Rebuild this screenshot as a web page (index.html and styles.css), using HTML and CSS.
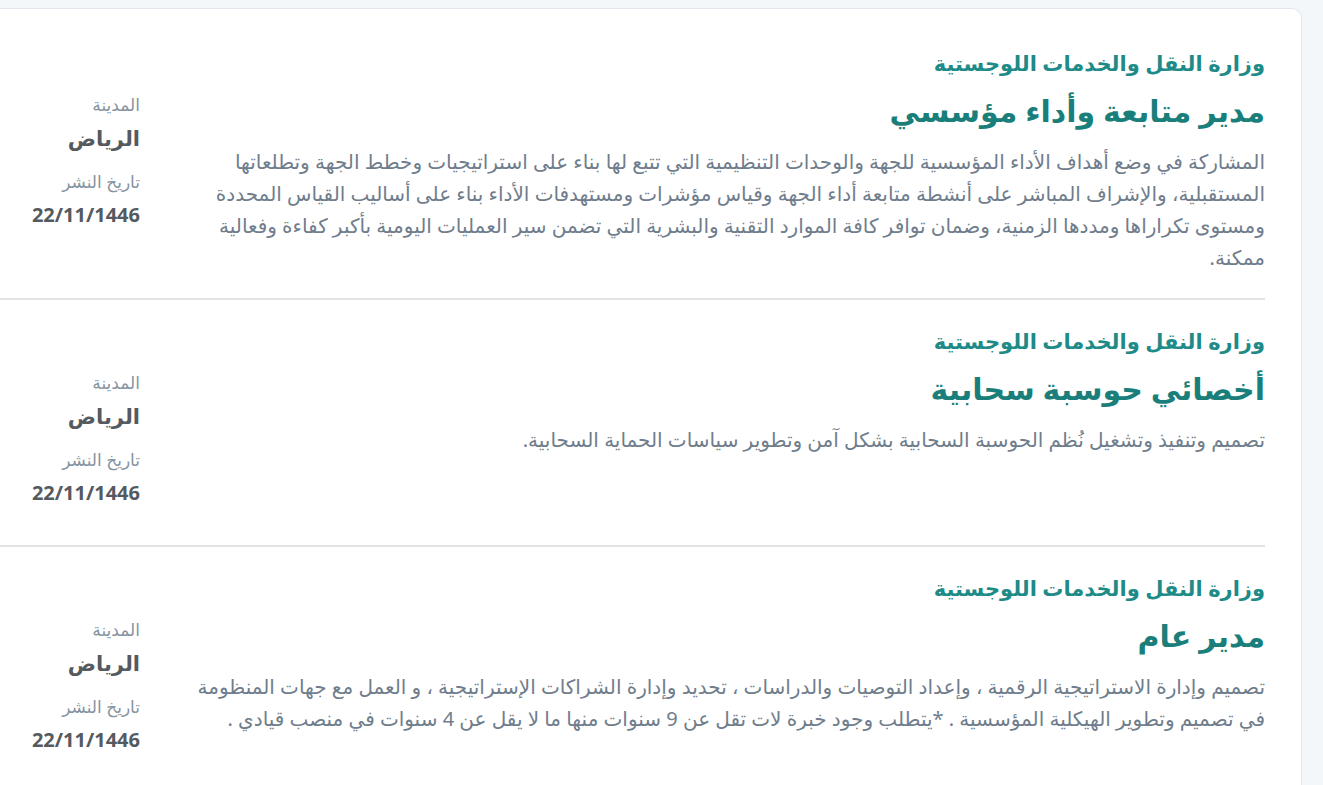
FILE: index.html
```html
<!DOCTYPE html>
<html lang="ar" dir="rtl">

<head>
    <meta charset="utf-8">
    <title>الوظائف</title>
    <link rel="stylesheet" href="styles.css">
</head>

<body>
    <div class="jobs-card">
        <div class="job-item">
            <div class="job-org">وزارة النقل والخدمات اللوجستية</div>
            <div class="job-body">
                <div class="job-main">
                    <h2 class="job-title">مدير متابعة وأداء مؤسسي</h2>
                    <p class="job-desc">المشاركة في وضع أهداف الأداء المؤسسية للجهة والوحدات التنظيمية التي تتبع لها بناء على استراتيجيات وخطط الجهة وتطلعاتها المستقبلية، والإشراف المباشر على أنشطة متابعة أداء الجهة وقياس مؤشرات ومستهدفات الأداء بناء على أساليب القياس المحددة ومستوى تكراراها ومددها الزمنية، وضمان توافر كافة الموارد التقنية والبشرية التي تضمن سير العمليات اليومية بأكبر كفاءة وفعالية ممكنة.</p>
                </div>
                <div class="job-meta">
                    <div class="meta-label">المدينة</div>
                    <div class="meta-value">الرياض</div>
                    <div class="meta-label">تاريخ النشر</div>
                    <div class="meta-value">22/11/1446</div>
                </div>
            </div>
        </div>

        <div class="job-item">
            <div class="job-org">وزارة النقل والخدمات اللوجستية</div>
            <div class="job-body">
                <div class="job-main">
                    <h2 class="job-title">أخصائي حوسبة سحابية</h2>
                    <p class="job-desc">تصميم وتنفيذ وتشغيل نُظم الحوسبة السحابية بشكل آمن وتطوير سياسات الحماية السحابية.</p>
                </div>
                <div class="job-meta">
                    <div class="meta-label">المدينة</div>
                    <div class="meta-value">الرياض</div>
                    <div class="meta-label">تاريخ النشر</div>
                    <div class="meta-value">22/11/1446</div>
                </div>
            </div>
        </div>

        <div class="job-item">
            <div class="job-org">وزارة النقل والخدمات اللوجستية</div>
            <div class="job-body">
                <div class="job-main">
                    <h2 class="job-title">مدير عام</h2>
                    <p class="job-desc">تصميم وإدارة الاستراتيجية الرقمية ، وإعداد التوصيات والدراسات ، تحديد وإدارة الشراكات الإستراتيجية ، و العمل مع جهات المنظومة في تصميم وتطوير الهيكلية المؤسسية . *يتطلب وجود خبرة لات تقل عن 9 سنوات منها ما لا يقل عن 4 سنوات في منصب قيادي .</p>
                </div>
                <div class="job-meta">
                    <div class="meta-label">المدينة</div>
                    <div class="meta-value">الرياض</div>
                    <div class="meta-label">تاريخ النشر</div>
                    <div class="meta-value">22/11/1446</div>
                </div>
            </div>
        </div>
    </div>
</body>

</html>
```

FILE: styles.css
```css
html,
body {
    background: #f4f7fa;
}

body {
    margin: 0;
    padding: 8px 21px 0 0;
    font-family: 'Noto Sans', 'DejaVu Sans', sans-serif;
    overflow: hidden;
    height: 777px;
}

.jobs-card {
    background: #ffffff;
    border: 1px solid #e2e7ed;
    border-left: none;
    border-bottom: none;
    border-radius: 0 10px 0 0;
    padding: 13px 36px 0 0;
    height: 100%;
}

.job-item {
    padding: 26px 0 24px;
    border-bottom: 2px solid #e3e3e3;
}

.job-item:last-child {
    border-bottom: none;
}

.job-org {
    color: #1e8b88;
    font-size: 21px;
    font-weight: 600;
    line-height: 30px;
}

.job-body {
    display: flex;
    align-items: flex-start;
    gap: 44px;
    margin-top: 11px;
}

.job-main {
    flex: 1;
}

.job-title {
    margin: 0;
    color: #1a7f7b;
    font-size: 30px;
    font-weight: 600;
    line-height: 44px;
}

.job-desc {
    margin: 13px 0 0;
    color: #6f7d8c;
    font-size: 20px;
    line-height: 32px;
}

.job-meta {
    width: 140px;
    flex-shrink: 0;
    padding-top: 5px;
}

.meta-label {
    color: #8693a0;
    font-size: 17px;
    line-height: 22px;
}

.meta-value {
    color: #555a5f;
    font-size: 21px;
    font-weight: 700;
    line-height: 30px;
    margin: 7px 0 18px;
}

.meta-value:last-child {
    font-size: 20px;
    margin-bottom: 13px;
}
```
